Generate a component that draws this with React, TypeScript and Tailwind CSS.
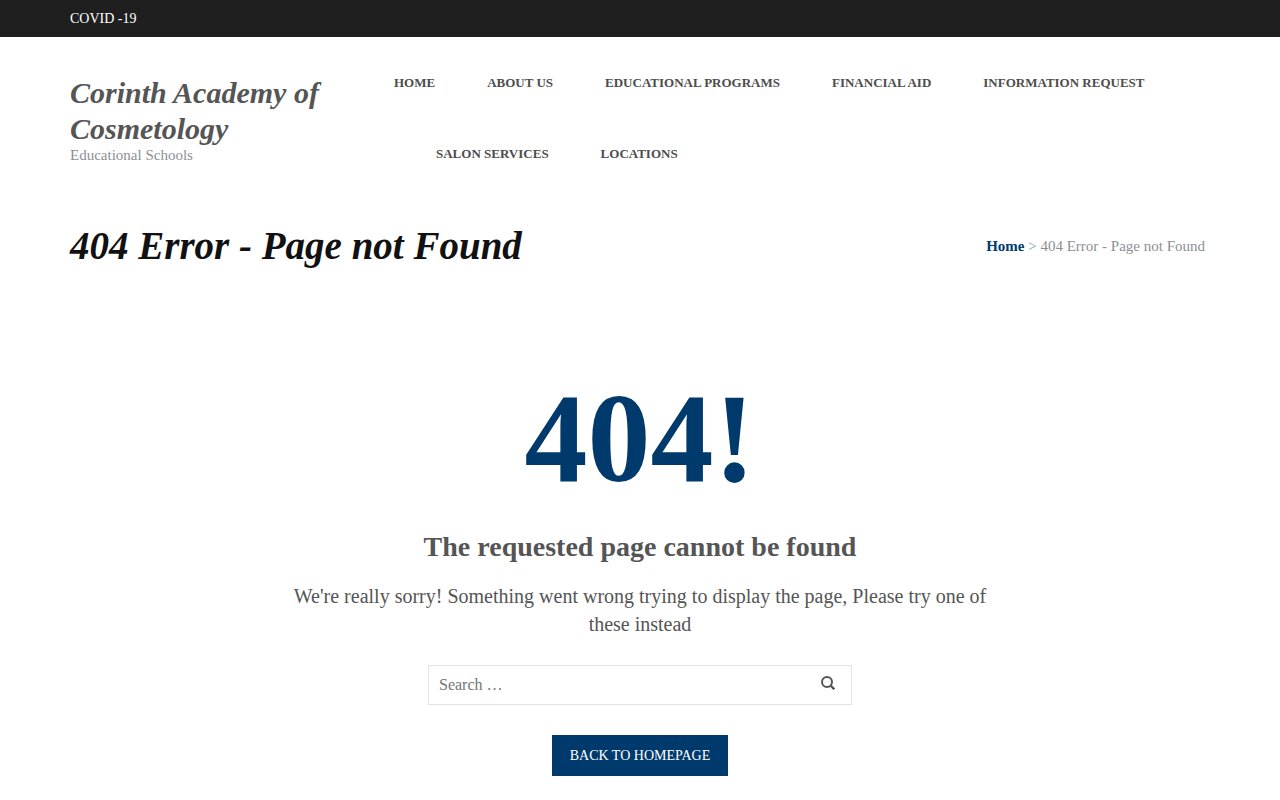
import React, { useState } from "react";

const links = [
  { label: "Home", className: "" },
  { label: "About Us", className: "" },
  { label: "Educational Programs", className: "" },
  { label: "Financial Aid", className: "" },
  { label: "Information Request", className: "" },
  { label: "Salon Services", className: "lg:ml-[42px]" },
  { label: "Locations", className: "" },
];

const Header = () => {
  return (
    <header>
      <div className="bg-[#1f1f1f]">
        <div className="mx-auto max-w-[1140px] text-sm leading-[37px] text-white">
          <a href="#covid">COVID -19</a>
        </div>
      </div>

      <div className="mx-auto flex max-w-[1140px] pt-[10px]">
        <div className="w-[298px] shrink-0 pt-7">
          <a
            href="#home"
            className="block max-w-[280px] text-[30px] font-bold italic leading-9 text-[#555]"
          >
            Corinth Academy of Cosmetology
          </a>
          <p className="text-[15px] leading-4 text-[#8c8f94]">
            Educational Schools
          </p>
        </div>

        <nav className="flex-1">
          <ul className="flex flex-wrap">
            {links.map((link) => (
              <li key={link.label} className={link.className}>
                <a
                  href="#nav"
                  className="block px-[26px] text-[13px] font-bold uppercase leading-[71px] text-[#4d4d4d]"
                >
                  {link.label}
                </a>
              </li>
            ))}
          </ul>
        </nav>
      </div>
    </header>
  );
};

const PageTitle = () => {
  return (
    <section className="mx-auto flex max-w-[1140px] items-center justify-between pt-[30px] pr-[5px]">
      <h1 className="text-[39px] font-bold italic leading-[54px] text-[#111]">
        404 Error - Page not Found
      </h1>
      <p className="text-[15px] leading-6 text-[#8c8f94]">
        <a href="#home" className="font-bold text-[#003a6c]">
          Home
        </a>{" "}
        &gt; 404 Error - Page not Found
      </p>
    </section>
  );
};

const SearchForm = () => {
  const [search, setSearch] = useState("");

  return (
    <form
      onSubmit={(event) => event.preventDefault()}
      className="mx-auto mt-[27px] flex h-10 w-full max-w-[424px] border border-[#e3e3e3]"
    >
      <input
        type="search"
        aria-label="Search"
        placeholder="Search …"
        value={search}
        onChange={(event) => setSearch(event.target.value)}
        className="min-w-0 flex-1 px-[10px] text-base outline-none placeholder:text-[#757575]"
      />
      <button
        type="submit"
        aria-label="Submit search"
        className="flex w-[46px] items-center justify-center pb-1 text-[#555]"
      >
        <svg
          viewBox="0 0 14 14"
          className="size-[14px]"
          fill="none"
          stroke="currentColor"
          strokeWidth="2"
        >
          <circle cx="6" cy="6" r="5" />
          <path d="M9.5 9.5 13.3 13.3" strokeWidth="2.4" />
        </svg>
      </button>
    </form>
  );
};

const App = () => {
  return (
    <div className="min-h-screen bg-white font-['Liberation_Serif',serif]">
      <Header />
      <PageTitle />

      <main className="mx-auto max-w-[700px] pt-24 pb-6 text-center text-[#555]">
        <h2 className="text-[126px] font-bold leading-[140px] text-[#003a6c]">
          404!
        </h2>
        <h3 className="mt-5 text-[28px] font-bold leading-9">
          The requested page cannot be found
        </h3>
        <p className="mt-[17px] text-xl leading-7">
          We're really sorry! Something went wrong trying to display the page,
          Please try one of these instead
        </p>
        <SearchForm />
        <a
          href="#home"
          className="mt-[30px] inline-block bg-[#003a6c] px-[18px] text-sm uppercase leading-[41px] text-white"
        >
          Back to Homepage
        </a>
      </main>
    </div>
  );
};

export default App;
